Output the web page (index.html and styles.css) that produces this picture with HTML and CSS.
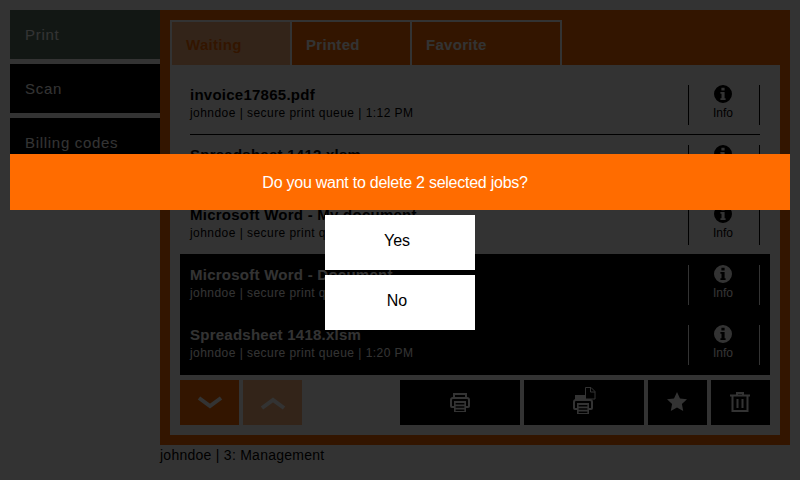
FILE: index.html
```html
<!DOCTYPE html>
<html lang="en">
<head>
<meta charset="utf-8">
<title>Print jobs</title>
<link rel="stylesheet" href="styles.css">
</head>
<body>
<svg class="defs" width="0" height="0" aria-hidden="true">
  <symbol id="info" viewBox="0 0 18 18">
    <path fill-rule="evenodd" d="M9 0a9 9 0 1 1 0 18A9 9 0 0 1 9 0ZM7.400 2.800v2.800h3.200V2.800ZM6.400 7v1.700h1.100v4.600H6.400V15h5.200v-1.700h-1V7Z"/>
  </symbol>
  <symbol id="printer" viewBox="0 0 20 19">
    <path fill="none" stroke="currentColor" stroke-width="2" d="M4 5V1h12v4"/>
    <path fill="currentColor" d="M3 4h14a3 3 0 0 1 3 3v6a2 2 0 0 1-2 2h-2v-2h2V7a1 1 0 0 0-1-1H3a1 1 0 0 0-1 1v6h2v2H2a2 2 0 0 1-2-2V7a3 3 0 0 1 3-3Z"/>
    <path fill="currentColor" d="M4 8h12v11H4Zm1.600 2v1.500h8.800V10Zm0 3.300v1.500h8.800v-1.500Zm0 3.200V18h8.800v-1.500Z" fill-rule="evenodd"/>
  </symbol>
</svg>

<div class="app">
  <nav class="side">
    <a class="side-item side-active">Print</a>
    <a class="side-item">Scan</a>
    <a class="side-item">Billing codes</a>
  </nav>
  <div class="main-col">
    <main class="frame">
      <div class="tabs">
        <a class="tab tab-active">Waiting</a>
        <a class="tab">Printed</a>
        <a class="tab tab-wide">Favorite</a>
      </div>
      <section class="panel">
        <ul class="jobs">
          <li class="job">
            <div class="job-inner">
              <div class="job-text"><strong>invoice17865.pdf</strong><span>johndoe | secure print queue | 1:12 PM</span></div>
              <div class="job-info"><svg class="i-info"><use href="#info"/></svg><span>Info</span></div>
            </div>
          </li>
          <li class="job">
            <div class="job-inner">
              <div class="job-text"><strong>Spreadsheet 1412.xlsm</strong><span>johndoe | secure print queue | 1:14 PM</span></div>
              <div class="job-info"><svg class="i-info"><use href="#info"/></svg><span>Info</span></div>
            </div>
          </li>
          <li class="job">
            <div class="job-inner">
              <div class="job-text"><strong>Microsoft Word - My document</strong><span>johndoe | secure print queue | 1:16 PM</span></div>
              <div class="job-info"><svg class="i-info"><use href="#info"/></svg><span>Info</span></div>
            </div>
          </li>
          <li class="job job-selected">
            <div class="job-inner">
              <div class="job-text"><strong>Microsoft Word - Document</strong><span>johndoe | secure print queue | 1:18 PM</span></div>
              <div class="job-info"><svg class="i-info"><use href="#info"/></svg><span>Info</span></div>
            </div>
          </li>
          <li class="job job-selected">
            <div class="job-inner">
              <div class="job-text"><strong>Spreadsheet 1418.xlsm</strong><span>johndoe | secure print queue | 1:20 PM</span></div>
              <div class="job-info"><svg class="i-info"><use href="#info"/></svg><span>Info</span></div>
            </div>
          </li>
        </ul>
        <div class="toolbar">
          <button class="btn btn-page"><svg class="i-chev" viewBox="0 0 26 14"><path d="M2 2l11 8 11-8"/></svg></button>
          <button class="btn btn-page btn-disabled"><svg class="i-chev" viewBox="0 0 26 14"><path d="M2 12L13 4l11 8"/></svg></button>
          <span class="spacer"></span>
          <button class="btn btn-wide"><svg class="i-print"><use href="#printer"/></svg></button>
          <button class="btn btn-wide">
            <svg class="i-copy" viewBox="0 0 23 27">
              <use href="#printer" width="20" height="19" y="8"/>
              <rect x="2" y="8" width="10" height="5" fill="currentColor"/>
              <path fill="#000" stroke="currentColor" stroke-width="1" d="M12.500 .5h5.500l4 4v7.500h-9.500Z"/>
              <path fill="none" stroke="currentColor" stroke-width="1" d="M17.500 .5v4.500h4.500"/>
            </svg>
          </button>
          <button class="btn btn-square"><svg class="i-star" viewBox="0 0 20 19"><path d="M10 0l3 6.400 7 .9-5.100 4.800 1.300 6.900L10 15.600 3.800 19l1.300-6.900L0 7.300l7-.9Z"/></svg></button>
          <button class="btn btn-square">
            <svg class="i-trash" viewBox="0 0 20 20" fill="none" stroke="currentColor">
              <path stroke-width="2" d="M0 3.500h20M7 3V1h6v2M2.500 4v15h15V4M7.500 7v9M12.500 7v9"/>
            </svg>
          </button>
        </div>
      </section>
    </main>
    <p class="status">johndoe | 3: Management</p>
  </div>
</div>

<div class="overlay">
  <div class="dialog">
    <p class="dialog-msg">Do you want to delete 2 selected jobs?</p>
    <button class="dialog-btn">Yes</button>
    <button class="dialog-btn">No</button>
  </div>
</div>
</body>
</html>
```
FILE: styles.css
```css
* { box-sizing: border-box; }
html, body { margin: 0; height: 100%; }
body {
  position: relative;
  width: 800px;
  height: 480px;
  overflow: hidden;
  background: #fff;
  color: #000;
  font-family: "Liberation Sans", Arial, sans-serif;
}
.defs { position: absolute; }

.app { display: flex; padding: 10px 10px 0; }

.side { width: 150px; display: flex; flex-direction: column; gap: 5px; }
.side-item {
  height: 49px;
  padding: 0 15px;
  display: flex;
  align-items: center;
  background: #000;
  color: #fff;
  font-size: 15px;
  letter-spacing: .7px;
}
.side-active { background: #5a7366; }

.main-col { flex: 1; }
.frame { height: 435px; background: #ff6c00; padding: 10px; }

.tabs { display: flex; height: 45px; }
.tab {
  display: flex;
  align-items: center;
  padding: 2px 0 0 14px;
  height: 45px;
  width: 122px;
  border: 2px solid #fff;
  border-bottom: 0;
  margin-left: -2px;
  color: #fff;
  font-size: 15px;
  font-weight: bold;
  letter-spacing: .3px;
}
.tab:first-child { margin-left: 0; }
.tab-active { background: #ffb57f; color: #ff6c00; }
.tab-wide { width: 152px; }

.panel { height: 370px; background: #fff; padding: 10px 10px 0; }

.jobs { list-style: none; margin: 0; padding: 0; }
.job { height: 60px; padding: 0 10px; }
.job-inner {
  height: 60px;
  padding-top: 10px;
  display: flex;
  border-bottom: 1px solid #000;
}
.job-selected { background: #000; color: #fff; }
.job-selected .job-inner { border-bottom: 0; }
.job:nth-child(3) .job-inner { border-bottom-color: transparent; }
.job:nth-child(4) { box-shadow: 0 -1px 0 #000; }

.job-text { flex: 1; display: flex; flex-direction: column; height: 40px; }
.job-text strong { font-size: 15px; line-height: 20px; letter-spacing: .25px; }
.job-text span { font-size: 12px; line-height: 16px; letter-spacing: .45px; }

.job-info {
  width: 72px;
  height: 40px;
  padding-right: 2px;
  border: solid currentColor;
  border-width: 0 1px;
  display: flex;
  flex-direction: column;
  align-items: center;
  font-size: 12px;
  line-height: 14px;
}
.i-info { width: 18px; height: 18px; margin: 0 0 3px; fill: currentColor; }

.toolbar { display: flex; gap: 4px; margin-top: 5px; }
.spacer { flex: 1; }
.btn {
  height: 45px;
  padding: 0;
  border: 0;
  background: #000;
  color: #fff;
  display: flex;
  align-items: center;
  justify-content: center;
}
.btn-page { width: 59px; background: #ff6c00; }
.btn-disabled { background: #ffb57f; }
.btn-wide { width: 120px; }
.btn-square { width: 59px; }

.i-chev { width: 26px; height: 14px; fill: none; stroke: #fff; stroke-width: 4; }
.i-print { width: 20px; height: 19px; }
.i-copy { width: 23px; height: 27px; margin: 0 0 4px 1px; }
.i-star { width: 20px; height: 19px; margin: 0 1px 2px 0; fill: currentColor; }
.i-trash { width: 20px; height: 20px; margin: 0 1px 2px 0; }

.status { margin: 0; height: 20px; font-size: 14px; line-height: 20px; letter-spacing: .26px; }

.overlay {
  position: absolute;
  inset: 0;
  background: rgba(0, 0, 0, .8);
  padding: 154px 10px 0;
}
.dialog { display: flex; flex-direction: column; align-items: center; gap: 5px; }
.dialog-msg {
  margin: 0;
  width: 100%;
  height: 56px;
  padding-right: 10px;
  background: #ff6c00;
  color: #fff;
  font-size: 16px;
  line-height: 57px;
  letter-spacing: -.25px;
  text-align: center;
}
.dialog-btn {
  width: 150px;
  height: 55px;
  border: 0;
  padding: 0 6px 4px 0;
  background: #fff;
  color: #000;
  font-family: inherit;
  font-size: 16px;
}
```
